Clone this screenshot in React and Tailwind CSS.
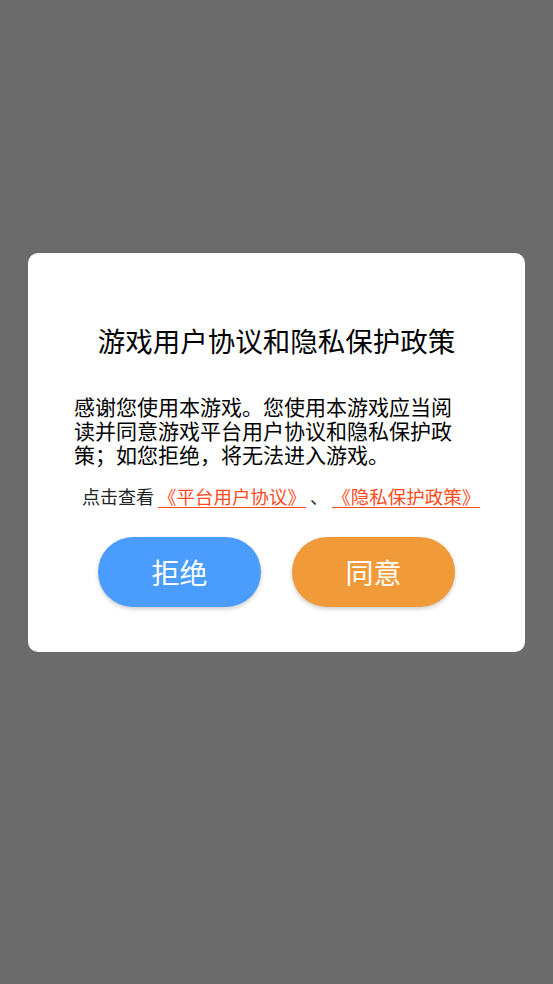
import React from 'react';

const font = { fontFamily: '"Noto Sans CJK SC", "Noto Sans", sans-serif' };

const PolicyLink = ({ children }) => (
  <span className="border-b border-[#ff4a1c] text-[18.5px] text-[#ff4a1c] leading-[22px]">{children}</span>
);

const App = () => {
  return (
    <div className="min-h-[984px] w-full bg-[#6b6b6b] pt-[253px]" style={font}>
      <div className="mx-[28px] rounded-[10px] bg-white pt-[73px] pb-[45px]">
        {/* Title */}
        <h1 className="text-center text-[27.5px] leading-[28px] text-black">游戏用户协议和隐私保护政策</h1>

        {/* Body */}
        <p className="mt-[40px] pl-[46px] pr-[56px] text-[21px] leading-[24px] text-black">
          感谢您使用本游戏。您使用本游戏应当阅读并同意游戏平台用户协议和隐私保护政策；如您拒绝，将无法进入游戏。
        </p>

        {/* Links */}
        <div className="mt-[18px] flex items-center whitespace-pre pl-[54px] text-[18px] leading-[24px] text-[#222]">
          <span>点击查看 </span>
          <PolicyLink>《平台用户协议》</PolicyLink>
          <span> 、 </span>
          <PolicyLink>《隐私保护政策》</PolicyLink>
        </div>

        {/* Buttons */}
        <div className="mt-[29px] flex justify-center gap-[31px]">
          <button className="flex h-[70px] w-[163px] items-center justify-center rounded-full bg-[#4a9dfd] text-[28px] text-white shadow-[0_2px_4px_rgba(0,0,0,0.2)]">
            拒绝
          </button>
          <button className="flex h-[70px] w-[163px] items-center justify-center rounded-full bg-[#f19a3a] text-[28px] text-white shadow-[0_2px_4px_rgba(0,0,0,0.2)]">
            同意
          </button>
        </div>
      </div>
    </div>
  );
};

export default App;
